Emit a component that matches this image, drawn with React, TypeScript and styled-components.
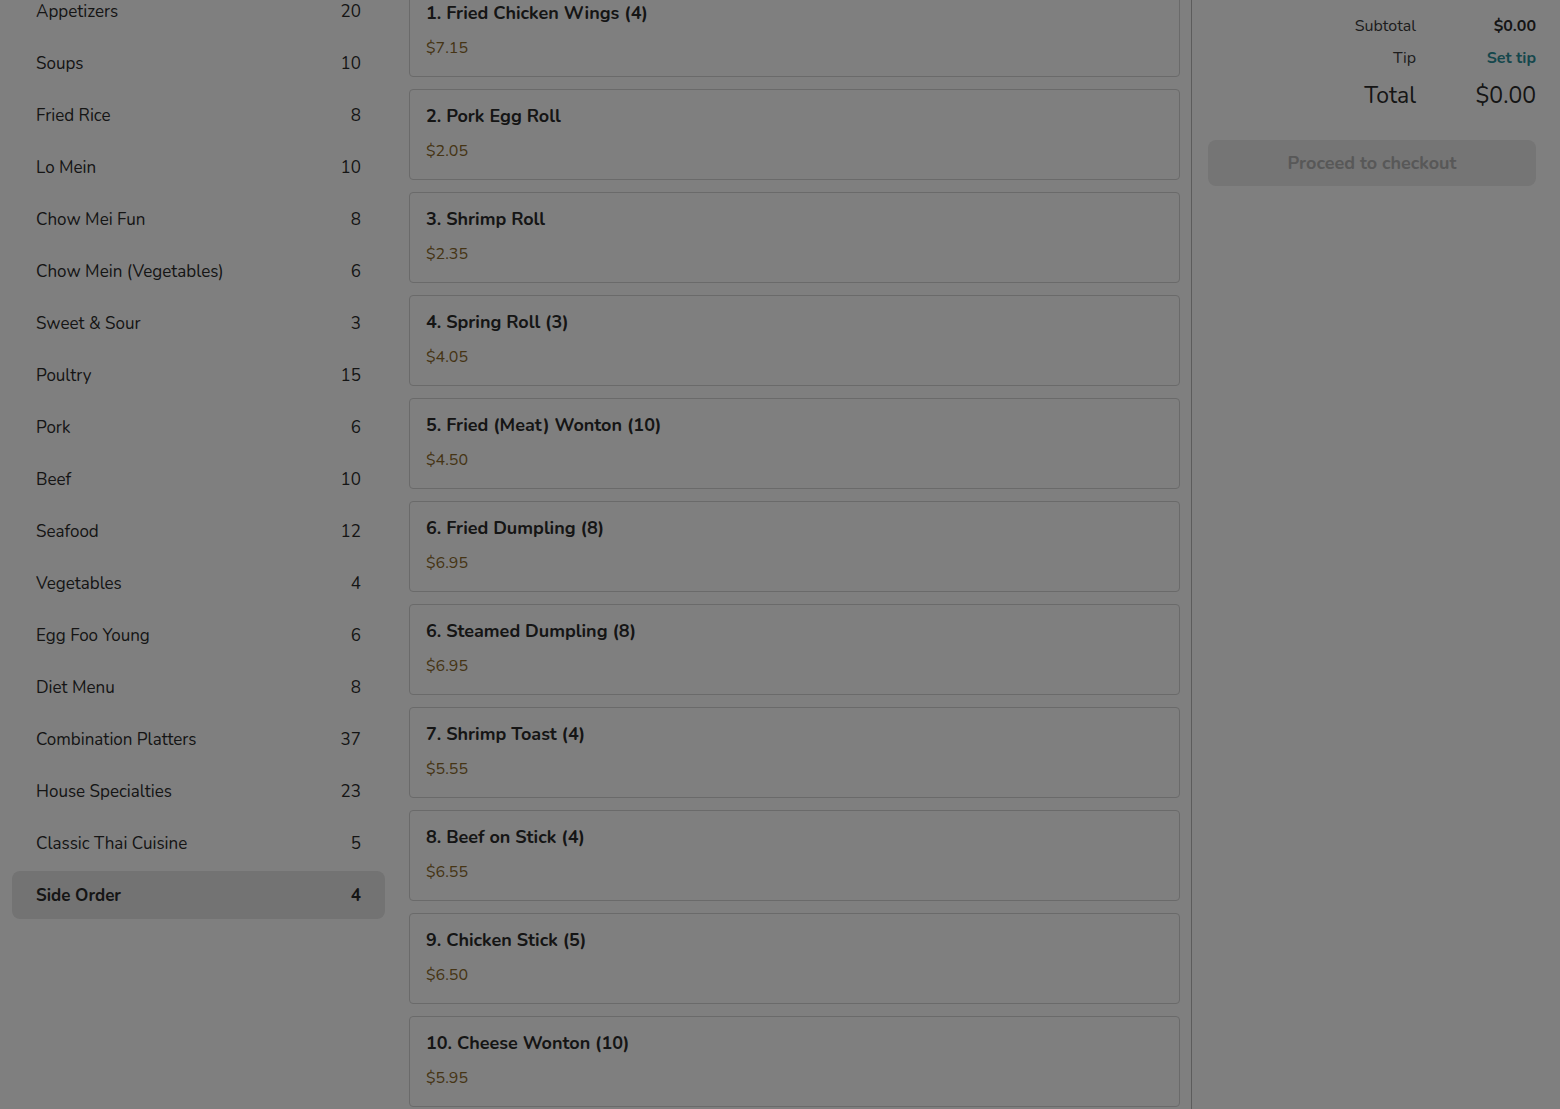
import React from "react";
import styled, { createGlobalStyle } from "styled-components";

const GlobalStyle = createGlobalStyle`
  html, body {
    margin: 0;
    padding: 0;
    height: 100%;
    overflow: hidden;
    background: #ffffff;
  }
  body {
    font-family: Nunito, Lato, "Open Sans", sans-serif;
    color: #2b2b2b;
  }
`;

const categories: [string, number][] = [
  ["Appetizers", 20],
  ["Soups", 10],
  ["Fried Rice", 8],
  ["Lo Mein", 10],
  ["Chow Mei Fun", 8],
  ["Chow Mein (Vegetables)", 6],
  ["Sweet & Sour", 3],
  ["Poultry", 15],
  ["Pork", 6],
  ["Beef", 10],
  ["Seafood", 12],
  ["Vegetables", 4],
  ["Egg Foo Young", 6],
  ["Diet Menu", 8],
  ["Combination Platters", 37],
  ["House Specialties", 23],
  ["Classic Thai Cuisine", 5],
  ["Side Order", 4],
];

const items: [string, string][] = [
  ["1. Fried Chicken Wings (4)", "$7.15"],
  ["2. Pork Egg Roll", "$2.05"],
  ["3. Shrimp Roll", "$2.35"],
  ["4. Spring Roll (3)", "$4.05"],
  ["5. Fried (Meat) Wonton (10)", "$4.50"],
  ["6. Fried Dumpling (8)", "$6.95"],
  ["6. Steamed Dumpling (8)", "$6.95"],
  ["7. Shrimp Toast (4)", "$5.55"],
  ["8. Beef on Stick (4)", "$6.55"],
  ["9. Chicken Stick (5)", "$6.50"],
  ["10. Cheese Wonton (10)", "$5.95"],
];

const App = () => {
  return (
    <>
      <GlobalStyle />
      <Layout>
        <Sidebar>
          <CategoryList>
            {categories.map(([name, count]) => (
              <CategoryRow key={name} $active={name === "Side Order"}>
                <span>{name}</span>
                <span>{count}</span>
              </CategoryRow>
            ))}
          </CategoryList>
        </Sidebar>
        <MenuColumn>
          <CardList>
            {items.map(([title, price], i) => (
              <ItemCard key={i}>
                <ItemTitle>{title}</ItemTitle>
                <ItemPrice>{price}</ItemPrice>
              </ItemCard>
            ))}
          </CardList>
        </MenuColumn>
        <CartPanel>
          <Summary>
            <SummaryLabel>Subtotal</SummaryLabel>
            <SummaryValue>$0.00</SummaryValue>
            <SummaryLabel>Tip</SummaryLabel>
            <TipLink>Set tip</TipLink>
            <TotalLabel>Total</TotalLabel>
            <TotalValue>$0.00</TotalValue>
          </Summary>
          <CheckoutButton disabled>Proceed to checkout</CheckoutButton>
        </CartPanel>
      </Layout>
      <Backdrop />
    </>
  );
};

const Layout = styled.div`
  display: grid;
  grid-template-columns: 397px 794px 1fr;
  height: 100vh;
  overflow: hidden;
`;

const Sidebar = styled.aside`
  padding: 0 12px;
  overflow: hidden;
`;

const CategoryList = styled.ul`
  list-style: none;
  margin: -13px 0 0;
  padding: 0;
  display: flex;
  flex-direction: column;
  gap: 4px;
`;

const CategoryRow = styled.li<{ $active?: boolean }>`
  height: 48px;
  display: flex;
  align-items: center;
  justify-content: space-between;
  padding: 0 24px;
  border-radius: 8px;
  font-size: 17px;
  color: #2b2b2b;
  background: ${(p) => (p.$active ? "#e6e6e6" : "transparent")};
  font-weight: ${(p) => (p.$active ? 700 : 400)};
`;

const MenuColumn = styled.main`
  padding: 0 11px 0 12px;
  overflow: hidden;
`;

const CardList = styled.div`
  margin-top: -14px;
  display: flex;
  flex-direction: column;
  gap: 12px;
`;

const ItemCard = styled.div`
  border: 1px solid #d4d4d4;
  border-radius: 4px;
  padding: 16px 16px;
  display: flex;
  flex-direction: column;
  gap: 12px;
`;

const ItemTitle = styled.div`
  font-size: 18px;
  font-weight: 700;
  line-height: 21px;
  color: #2b2b2b;
`;

const ItemPrice = styled.div`
  font-size: 16px;
  line-height: 24px;
  color: #8a682a;
`;

const CartPanel = styled.section`
  border-left: 1px solid #b8b8b8;
  padding: 14px 24px 0 16px;
  display: flex;
  flex-direction: column;
`;

const Summary = styled.div`
  display: grid;
  grid-template-columns: 1fr 120px;
  align-items: center;
  row-gap: 8px;
  text-align: right;
`;

const SummaryLabel = styled.span`
  font-size: 16px;
  line-height: 24px;
  color: #3a3a3a;
`;

const SummaryValue = styled.span`
  font-size: 16px;
  line-height: 24px;
  font-weight: 700;
  color: #2b2b2b;
`;

const TipLink = styled(SummaryValue)`
  color: #2a8e98;
`;

const TotalLabel = styled.span`
  font-size: 23px;
  line-height: 36px;
  color: #2b2b2b;
`;

const TotalValue = styled(TotalLabel)``;

const CheckoutButton = styled.button`
  margin-top: 26px;
  height: 46px;
  border: none;
  border-radius: 8px;
  background: #eaeaea;
  color: #b0b0b0;
  font-family: inherit;
  font-size: 18px;
  font-weight: 700;
`;

const Backdrop = styled.div`
  position: fixed;
  inset: 0;
  background: rgba(0, 0, 0, 0.5);
`;

export default App;
